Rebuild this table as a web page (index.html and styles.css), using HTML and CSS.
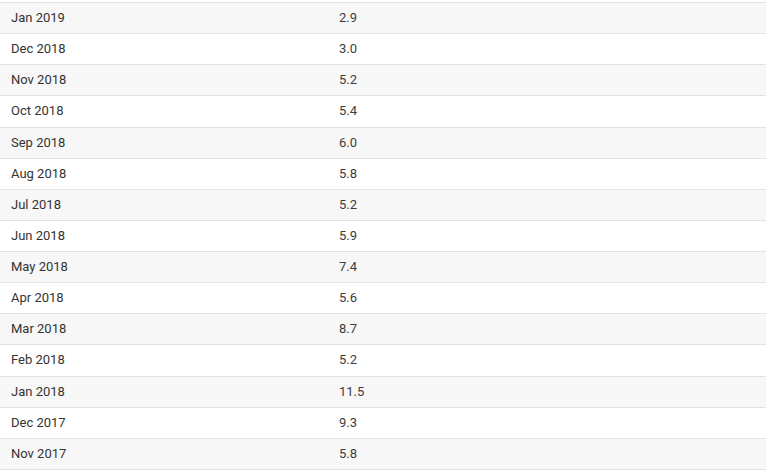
FILE: index.html
```html
<!DOCTYPE html>
<html>
<head>
<meta charset="utf-8">
<link rel="stylesheet" href="styles.css">
</head>
<body>
<table class="data">
<tbody>
<tr><td class="date">Jan 2019</td><td class="val">2.9</td></tr>
<tr><td class="date">Dec 2018</td><td class="val">3.0</td></tr>
<tr><td class="date">Nov 2018</td><td class="val">5.2</td></tr>
<tr><td class="date">Oct 2018</td><td class="val">5.4</td></tr>
<tr><td class="date">Sep 2018</td><td class="val">6.0</td></tr>
<tr><td class="date">Aug 2018</td><td class="val">5.8</td></tr>
<tr><td class="date">Jul 2018</td><td class="val">5.2</td></tr>
<tr><td class="date">Jun 2018</td><td class="val">5.9</td></tr>
<tr><td class="date">May 2018</td><td class="val">7.4</td></tr>
<tr><td class="date">Apr 2018</td><td class="val">5.6</td></tr>
<tr><td class="date">Mar 2018</td><td class="val">8.7</td></tr>
<tr><td class="date">Feb 2018</td><td class="val">5.2</td></tr>
<tr><td class="date">Jan 2018</td><td class="val">11.5</td></tr>
<tr><td class="date">Dec 2017</td><td class="val">9.3</td></tr>
<tr><td class="date">Nov 2017</td><td class="val">5.8</td></tr>
</tbody>
</table>
</body>
</html>
```
FILE: styles.css
```css
html, body {
  margin: 0;
  padding: 0;
  background: #ffffff;
}
body {
  padding-top: 2px;
  font-family: Roboto, "Liberation Sans", sans-serif;
  font-size: 13px;
  color: #333333;
}
.data {
  width: 766px;
  border-collapse: collapse;
  table-layout: fixed;
}
.data tr {
  height: 31.13px;
  border-top: 1px solid #e3e3e3;
  border-bottom: 1px solid #e3e3e3;
}
.data tr:nth-child(odd) {
  background: #f7f7f7;
}
.data td {
  padding: 0;
  vertical-align: middle;
  line-height: 16px;
}
.date {
  width: 339px;
  padding-left: 11px !important;
  box-sizing: border-box;
}
.val {
  color: #3d3d3d;
}
```
